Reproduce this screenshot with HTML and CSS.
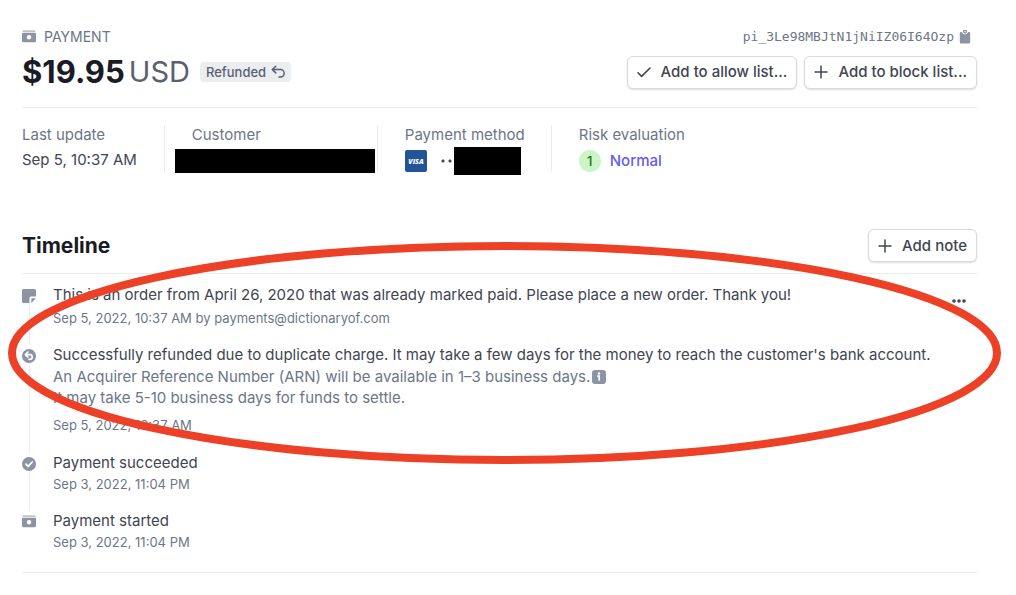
FILE: index.html
```html
<!DOCTYPE html>
<html lang="en">
<head>
<meta charset="utf-8">
<meta name="viewport" content="width=device-width, initial-scale=1">
<title>Payment</title>
<link rel="stylesheet" href="styles.css">
</head>
<body>
<svg class="sprite" aria-hidden="true">
  <symbol id="cash" viewBox="0 0 14 14"><path fill="#a3acb9" d="M1.500 .5h11a.7.7 0 0 1 .7 1.300H.8a.7.7 0 0 1 .7-1.300z"/><path fill="currentColor" fill-rule="evenodd" d="M1 2.800h12a1 1 0 0 1 1 1v7a1.500 1.500 0 0 1-1.500 1.500h-11A1.500 1.500 0 0 1 0 10.800v-7a1 1 0 0 1 1-1zM7 5a2.300 2.300 0 1 0 0 4.600A2.300 2.300 0 0 0 7 5z"/></symbol>
  <symbol id="plus" viewBox="0 0 14 14"><path d="M7 1v12M1 7h12" fill="none" stroke="currentColor" stroke-width="1.500" stroke-linecap="round"/></symbol>
</svg>
<main class="page">
  <header class="header">
    <div class="row">
      <div class="kicker"><svg class="icon"><use href="#cash"/></svg><span>PAYMENT</span></div>
      <button class="copy" type="button"><span>pi_3Le98MBJtN1jNiIZ06I64Ozp</span><svg class="icon" viewBox="0 0 14 14"><path fill="currentColor" d="M3 2h.8a3.300 3.300 0 0 0 6.400 0h.8a1.200 1.200 0 0 1 1.200 1.200v9A1.300 1.300 0 0 1 10.900 13.500H3.100a1.300 1.300 0 0 1-1.300-1.300v-9A1.200 1.200 0 0 1 3 2z"/><path fill="currentColor" d="M5 .7A1 1 0 0 1 6 0h2a1 1 0 0 1 1 .7v.8a2 2 0 0 1-4 0z"/><circle cx="7" cy="1.500" r=".7" fill="#fff"/></svg></button>
    </div>
    <div class="row">
      <h1 class="amount"><span>$19.95</span><span class="currency">USD</span><span class="badge">Refunded<svg class="icon" viewBox="0 0 14 14"><path d="M4.800 1.300 1.300 4.600l3.500 3.300M1.500 4.600h8a3.700 3.700 0 0 1 0 7.400H8" fill="none" stroke="currentColor" stroke-width="1.500" stroke-linecap="round" stroke-linejoin="round"/></svg></span></h1>
      <div class="actions">
        <button class="button" type="button"><svg class="icon" viewBox="0 0 14 14"><path d="m1 7.800 3.600 3.600L13 3" fill="none" stroke="currentColor" stroke-width="1.600" stroke-linecap="round" stroke-linejoin="round"/></svg>Add to allow list...</button>
        <button class="button" type="button"><svg class="icon"><use href="#plus"/></svg>Add to block list...</button>
      </div>
    </div>
  </header>

  <dl class="facts">
    <div class="fact"><dt>Last update</dt><dd>Sep 5, 10:37 AM</dd></div>
    <div class="fact customer"><dt>Customer</dt><dd><span class="redacted name"></span></dd></div>
    <div class="fact method"><dt>Payment method</dt><dd><svg class="visa" viewBox="0 0 22 22" role="img" aria-label="Visa"><rect width="22" height="22" rx="2" fill="#225498"/><text x="11" y="14" text-anchor="middle" class="visa-text">VISA</text></svg><span class="dots"></span><span class="redacted number"></span></dd></div>
    <div class="fact"><dt>Risk evaluation</dt><dd class="risk"><span class="score">1</span><a href="#">Normal</a></dd></div>
  </dl>

  <section>
    <div class="section-head">
      <h2>Timeline</h2>
      <button class="button" type="button"><svg class="icon"><use href="#plus"/></svg>Add note</button>
    </div>
    <ol class="timeline">
      <li class="event note">
        <div class="rail"><svg class="icon" viewBox="0 0 14 14"><path fill="currentColor" d="M1.500 0h11A1.500 1.500 0 0 1 14 1.500V7.500H9A1.500 1.500 0 0 0 7.500 9V14H1.500A1.500 1.500 0 0 1 0 12.500v-11A1.500 1.500 0 0 1 1.500 0z"/><path fill="currentColor" d="M10 9.300h4L9.300 14v-4a.7.7 0 0 1 .7-.7z"/></svg></div>
        <div class="body"><p>This is an order from April 26, 2020 that was already marked paid. Please place a new order. Thank you!</p><p class="time">Sep 5, 2022, 10:37 AM by payments@dictionaryof.com</p></div>
        <button class="more" type="button" aria-label="More"><svg class="icon" viewBox="0 0 14 14" fill="currentColor"><circle cx="2" cy="7" r="1.800"/><circle cx="7" cy="7" r="1.800"/><circle cx="12" cy="7" r="1.800"/></svg></button>
      </li>
      <li class="event refund">
        <div class="rail"><svg class="icon" viewBox="0 0 14 14"><circle cx="7" cy="7" r="7" fill="currentColor"/><path d="M6 3 3.300 5.600 6 8.200M3.500 5.600h4.300a2.400 2.400 0 0 1 0 4.800H7" fill="none" stroke="#fff" stroke-width="1.600" stroke-linecap="round" stroke-linejoin="round"/></svg></div>
        <div class="body"><p>Successfully refunded due to duplicate charge. It may take a few days for the money to reach the customer's bank account.</p><div class="details"><p class="detail">An Acquirer Reference Number (ARN) will be available in 1–3 business days.<svg class="icon" viewBox="0 0 14 14"><rect width="14" height="14" rx="3" fill="currentColor"/><circle cx="7" cy="3.500" r="1.200" fill="#fff"/><path d="M5.200 6.200h2v4.600M7.200 10.800V6.200" fill="none" stroke="#fff" stroke-width="1.700"/></svg></p><p class="detail">It may take 5-10 business days for funds to settle.</p></div><p class="time">Sep 5, 2022, 10:37 AM</p></div>
      </li>
      <li class="event">
        <div class="rail"><svg class="icon" viewBox="0 0 14 14"><circle cx="7" cy="7" r="7" fill="currentColor"/><path d="m4 7.200 2.200 2.200L10.200 5" fill="none" stroke="#fff" stroke-width="1.800" stroke-linecap="round" stroke-linejoin="round"/></svg></div>
        <div class="body"><p>Payment succeeded</p><p class="time">Sep 3, 2022, 11:04 PM</p></div>
      </li>
      <li class="event">
        <div class="rail"><svg class="icon"><use href="#cash"/></svg></div>
        <div class="body"><p>Payment started</p><p class="time">Sep 3, 2022, 11:04 PM</p></div>
      </li>
    </ol>
  </section>
  <div class="highlight" aria-hidden="true"><svg><ellipse cx="50%" cy="50%" rx="50%" ry="50%"/></svg></div>
</main>
</body>
</html>
```
FILE: styles.css
```css
* { box-sizing: border-box; }
body {
  margin: 0;
  background: #fff;
  color: #414552;
  font: 15px/20px Inter, "Liberation Sans", sans-serif;
}
h1, h2, p, dl, dd, ol { margin: 0; padding: 0; }
button { font: inherit; color: inherit; cursor: pointer; }
.sprite { position: absolute; width: 0; height: 0; }
.icon { display: block; flex: none; width: 14px; height: 14px; }
.page { position: relative; padding: 27px 39px 22px 22px; }

.row, .section-head { display: flex; justify-content: space-between; align-items: center; }
.header { padding-bottom: 17px; border-bottom: 1px solid #ebeef1; }
.kicker { display: flex; align-items: center; gap: 8px; color: #6c7688; }
.kicker .icon, .copy .icon, .rail { color: #8c93a3; }
.kicker { font-size: 14px; }
.copy {
  display: flex;
  align-items: center;
  gap: 4px;
  padding: 0 5px 0 0;
  border: 0;
  background: none;
  color: #6c7688;
  font: 13px/20px "DejaVu Sans Mono", monospace;
}
.header .row + .row { margin-top: 7px; }
.amount { display: flex; align-items: center; font-size: 31px; line-height: 36px; font-weight: 700; color: #1a1b25; }
.currency { margin-left: 4px; font-size: 29px; font-weight: 400; color: #596171; }
.badge {
  display: flex;
  align-items: center;
  gap: 5px;
  margin-left: 10px;
  padding: 0 6px;
  border-radius: 4px;
  background: #ebeef1;
  color: #596171;
  font-size: 13px;
  line-height: 20px;
  font-weight: 500;
}
.actions { display: flex; gap: 7px; }
.button {
  display: flex;
  align-items: center;
  gap: 10px;
  height: 33px;
  padding: 0 9px;
  border: 1px solid #d8dbe2;
  border-radius: 6px;
  background: #fff;
  box-shadow: 0 1px 2px rgba(0, 0, 0, .14);
  font-weight: 500;
}

.facts { display: flex; margin-top: 17px; }
.fact { height: 47px; padding: 0 27px; }
.fact + .fact { border-left: 1px solid #ebeef1; }
.fact:first-child { padding-left: 0; }
.fact dt { color: #6c7688; }
.fact dd { display: flex; align-items: center; height: 22px; margin-top: 5px; white-space: nowrap; }
.fact:first-child dd { height: 20px; }
.fact.customer { padding: 0 2px 0 10px; }
.fact.method { padding-right: 26px; }
.customer dt { padding-left: 17px; }
.redacted { flex: none; background: #000; }
.name { width: 200px; height: 24px; }
.number { width: 67px; height: 28px; margin-left: 1px; }
.visa { flex: none; width: 22px; height: 22px; }
.visa-text { fill: #fff; font: italic 800 7px "Open Sans", sans-serif; }
.dots { width: 12px; height: 4px; margin-left: 14px; background: radial-gradient(circle at 2px 50%, #414552 1px, transparent 2px) 0 0 / 7px 4px; }
.risk { gap: 9px; }
.score {
  width: 22px;
  border-radius: 50%;
  background: #cbf4c9;
  color: #217005;
  font-size: 13px;
  line-height: 22px;
  font-weight: 500;
  text-align: center;
}
.risk a { color: #625afa; font-weight: 500; text-decoration: none; }

.section-head { margin-top: 57px; padding-bottom: 11px; border-bottom: 1px solid #ebeef1; }
h2 { font-size: 21px; line-height: 28px; font-weight: 700; color: #1a1b25; }
.timeline { list-style: none; padding: 11px 0 20px; border-bottom: 1px solid #ebeef1; }
.event { display: flex; gap: 17px; }
.body { flex: 1; padding-bottom: 17px; }
.refund .body { padding-bottom: 18px; }
.event:last-child .body { padding-bottom: 0; }
.rail { display: flex; flex-direction: column; align-items: center; width: 14px; padding-top: 4px; }
.event:not(:last-child) .rail::after { content: ""; flex: 1; width: 1px; background: #ebeef1; }
.body .time { margin-top: 1px; font-size: 13px; color: #6c7688; }
.note .body .time { margin-top: 3px; }
.details { margin-top: 1px; }
.detail { display: flex; align-items: center; gap: 2px; line-height: 21px; color: #6c7688; }
.detail .icon { color: #8c93a3; }
.refund .body .time { margin-top: 7px; }
.more { align-self: flex-start; margin: 9px 11px 0 0; padding: 0; border: 0; background: none; }

.highlight {
  position: absolute;
  top: 242px;
  left: 8px;
  right: 15px;
  height: 222px;
  padding: 4px;
  pointer-events: none;
}
.highlight svg { display: block; width: 100%; height: 100%; overflow: visible; fill: none; stroke: #ec4126; stroke-width: 8px; }
```
